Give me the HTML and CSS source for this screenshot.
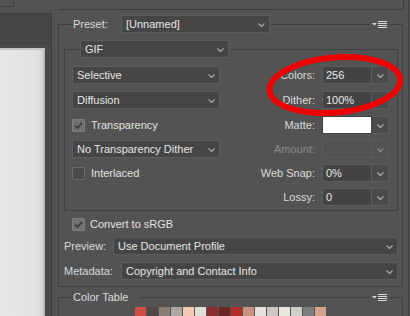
FILE: index.html
```html
<!DOCTYPE html>
<html>
<head>
<meta charset="utf-8">
<link rel="stylesheet" href="styles.css">
</head>
<body>
<div class="app">
  <div class="left">
    <div class="lt-top"><div class="lt-btn"></div></div>
    <div class="lt-tabs"></div>
    <div class="lt-canvas"><div class="lt-image"></div></div>
  </div>

  <div class="panel">
    <div class="topbox"></div>

    <div class="group outer">
      <div class="head">
        <span class="rule lead"></span>
        <span class="legend preset-label">Preset:</span>
        <div class="select preset-select"><span class="txt">[Unnamed]</span><svg class="chev" width="7" height="4" viewBox="0 0 7 4"><polyline points="0.5,0.5 3.5,3.5 6.5,0.5"/></svg></div>
        <span class="rule grow"></span>
        <svg class="menu" width="15" height="7" viewBox="0 0 15 7"><polygon points="0,2 5,2 2.5,4.5"/><rect x="6" y="0" width="9" height="1"/><rect x="6" y="2" width="9" height="1"/><rect x="6" y="4" width="9" height="1"/><rect x="6" y="6" width="9" height="1"/></svg>
        <span class="rule tail"></span>
      </div>

      <div class="body outer-body">
        <div class="group inner">
          <div class="head">
            <span class="rule lead2"></span>
            <div class="select gif-select"><span class="txt">GIF</span><svg class="chev" width="7" height="4" viewBox="0 0 7 4"><polyline points="0.5,0.5 3.5,3.5 6.5,0.5"/></svg></div>
            <span class="rule grow"></span>
          </div>
          <div class="opts">
            <div class="select"><span class="txt">Selective</span><svg class="chev" width="7" height="4" viewBox="0 0 7 4"><polyline points="0.5,0.5 3.5,3.5 6.5,0.5"/></svg></div>
            <div class="rcell"><span class="rlabel">Colors:</span><div class="combo"><span class="val">256</span><span class="arr"><svg class="chev" width="7" height="4" viewBox="0 0 7 4"><polyline points="0.5,0.5 3.5,3.5 6.5,0.5"/></svg></span></div></div>

            <div class="select"><span class="txt">Diffusion</span><svg class="chev" width="7" height="4" viewBox="0 0 7 4"><polyline points="0.5,0.5 3.5,3.5 6.5,0.5"/></svg></div>
            <div class="rcell"><span class="rlabel">Dither:</span><div class="combo"><span class="val">100%</span><span class="arr"><svg class="chev" width="7" height="4" viewBox="0 0 7 4"><polyline points="0.5,0.5 3.5,3.5 6.5,0.5"/></svg></span></div></div>

            <div class="check"><span class="box on"><svg width="11" height="11" viewBox="0 0 11 11"><polyline points="2,5.5 4.5,8 9,3"/></svg></span><span>Transparency</span></div>
            <div class="rcell"><span class="rlabel">Matte:</span><div class="combo"><span class="val white"></span><span class="arr"><svg class="chev" width="7" height="4" viewBox="0 0 7 4"><polyline points="0.5,0.5 3.5,3.5 6.5,0.5"/></svg></span></div></div>

            <div class="select"><span class="txt">No Transparency Dither</span><svg class="chev" width="7" height="4" viewBox="0 0 7 4"><polyline points="0.5,0.5 3.5,3.5 6.5,0.5"/></svg></div>
            <div class="rcell"><span class="rlabel dim">Amount:</span><div class="combo disabled"><span class="val"></span><span class="arr"><svg class="chev" width="7" height="4" viewBox="0 0 7 4"><polyline points="0.5,0.5 3.5,3.5 6.5,0.5"/></svg></span></div></div>

            <div class="check"><span class="box"></span><span>Interlaced</span></div>
            <div class="rcell"><span class="rlabel">Web Snap:</span><div class="combo"><span class="val">0%</span><span class="arr"><svg class="chev" width="7" height="4" viewBox="0 0 7 4"><polyline points="0.5,0.5 3.5,3.5 6.5,0.5"/></svg></span></div></div>

            <div></div>
            <div class="rcell"><span class="rlabel">Lossy:</span><div class="combo"><span class="val">0</span><span class="arr"><svg class="chev" width="7" height="4" viewBox="0 0 7 4"><polyline points="0.5,0.5 3.5,3.5 6.5,0.5"/></svg></span></div></div>
          </div>
        </div>

        <div class="check srgb"><span class="box on"><svg width="11" height="11" viewBox="0 0 11 11"><polyline points="2,5.5 4.5,8 9,3"/></svg></span><span>Convert to sRGB</span></div>

        <div class="frow preview-row"><span class="flabel">Preview:</span><div class="select wide"><span class="txt">Use Document Profile</span><svg class="chev" width="7" height="4" viewBox="0 0 7 4"><polyline points="0.5,0.5 3.5,3.5 6.5,0.5"/></svg></div></div>
        <div class="frow meta-row"><span class="flabel meta">Metadata:</span><div class="select wide"><span class="txt">Copyright and Contact Info</span><svg class="chev" width="7" height="4" viewBox="0 0 7 4"><polyline points="0.5,0.5 3.5,3.5 6.5,0.5"/></svg></div></div>
      </div>
    </div>

    <div class="group ctable">
      <div class="head">
        <span class="rule lead"></span>
        <span class="legend ct-label">Color Table</span>
        <span class="rule grow"></span>
        <svg class="menu" width="15" height="7" viewBox="0 0 15 7"><polygon points="0,2 5,2 2.5,4.5"/><rect x="6" y="0" width="9" height="1"/><rect x="6" y="2" width="9" height="1"/><rect x="6" y="4" width="9" height="1"/><rect x="6" y="6" width="9" height="1"/></svg>
        <span class="rule tail"></span>
      </div>
      <div class="swatches">
        <span class="sw" style="background:#d04c47"></span>
        <span class="sw" style="background:#4e4847"></span>
        <span class="sw" style="background:#8a7d78"></span>
        <span class="sw" style="background:#aaa8a0"></span>
        <span class="sw" style="background:#f5c9b3"></span>
        <span class="sw" style="background:#e0ded7"></span>
        <span class="sw" style="background:#8b2e2d"></span>
        <span class="sw" style="background:#6c2622"></span>
        <span class="sw" style="background:#b42d2d"></span>
        <span class="sw" style="background:#c8937c"></span>
        <span class="sw" style="background:#e6e2de"></span>
        <span class="sw" style="background:#cfc5c5"></span>
        <span class="sw" style="background:#e8e8e0"></span>
        <span class="sw" style="background:#d0d0c8"></span>
        <span class="sw" style="background:#7e7e7e"></span>
        <span class="sw" style="background:#d4a48c"></span>
      </div>
    </div>
  </div>

  <div class="edge"></div>

  <svg class="annotation" width="410" height="316" viewBox="0 0 410 316">
    <ellipse cx="335" cy="85" rx="65.5" ry="27.5" transform="rotate(-5 335 85)"/>
  </svg>
</div>
</body>
</html>
```

FILE: styles.css
```css
* { box-sizing: border-box; }

html, body {
  margin: 0;
  padding: 0;
  background: #535353;
}

body {
  font-family: "Liberation Sans", Arial, sans-serif;
  font-size: 11px;
  color: #e0e0e0;
}

.app {
  position: relative;
  display: flex;
  width: 410px;
  height: 316px;
  overflow: hidden;
  background: #535353;
}

/* ---------- left preview column ---------- */
.left {
  width: 52px;
  flex: none;
  display: flex;
  flex-direction: column;
}

.lt-top {
  height: 13px;
  flex: none;
}

.lt-btn {
  width: 14px;
  height: 7px;
  border-right: 1px solid #3e3e3e;
  border-bottom: 1px solid #3e3e3e;
}

.lt-tabs {
  height: 31px;
  flex: none;
  background: #464646;
  border-top: 1px solid #3d3d3d;
  border-bottom: 1px solid #3d3d3d;
  border-right: 1px solid #3a3a3a;
}

.lt-canvas {
  flex: 1;
  background: #4a4a4a;
  padding: 4px 6px 0 0;
  border-right: 1px solid #3a3a3a;
}

.lt-image {
  height: 100%;
  border-top: 2px solid #c6c6c6;
  border-right: 2px solid #bdbdbd;
  background: linear-gradient(to right, #e8e8e8, #e3e3e3 80%, #d6d6d6);
}

/* ---------- right panel ---------- */
.panel {
  width: 357px;
  flex: none;
  padding: 0 5px 0 6px;
  border-right: 1px solid #3e3e3e;
}

.edge {
  width: 1px;
  flex: none;
}

.topbox {
  height: 10px;
  margin-right: -1px;
  border-bottom: 1px solid #3e3e3e;
  border-right: 1px solid #3e3e3e;
}

.group {
  border: 1px solid #3e3e3e;
}

.group.outer {
  margin-top: 14px;
}

.head {
  display: flex;
  align-items: flex-start;
  height: 18px;
  margin-top: -10px;
  background: #535353;
}

.rule {
  height: 1px;
  margin-top: 9px;
  background: #3e3e3e;
}

.rule.lead { width: 14px; }
.rule.lead2 { width: 15px; }
.rule.grow { flex: 1; margin-left: 2px; }
.rule.tail { width: 12px; }

.legend {
  line-height: 18px;
  color: #dadada;
  white-space: nowrap;
}

.preset-label { width: 48px; }
.ct-label { width: 65px; }

.menu {
  flex: none;
  margin: 6px 3px 0 3px;
  fill: #d8d8d8;
}

/* select */
.select {
  display: flex;
  align-items: center;
  height: 18px;
  padding: 0 4px 0 4px;
  background: #454545;
  border: 1px solid #5c5c5c;
  border-radius: 1px;
  color: #e6e6e6;
}

.select .txt {
  flex: 1;
  white-space: nowrap;
  overflow: hidden;
}

.chev {
  flex: none;
  margin-top: 2px;
  fill: none;
  stroke: #a8a8a8;
  stroke-width: 1.2;
}

.preset-select { width: 149px; }
.gif-select { width: 149px; }

/* bodies */
.outer-body {
  padding: 0 4px 6px 5px;
}

.group.inner {
  margin-top: 16px;
}

.opts {
  display: grid;
  grid-template-columns: 148px 1fr;
  grid-template-rows: 19px 19px 18px 18px 18px 18px;
  row-gap: 6px;
  align-items: start;
  padding: 8px 8px 4px 7px;
}

.rcell {
  display: flex;
  align-items: center;
  justify-content: flex-end;
  height: 18px;
}

.rlabel {
  color: #dadada;
  margin-right: 7px;
  white-space: nowrap;
}

.rlabel.dim { color: #8a8a8a; }

.combo {
  display: flex;
  width: 67px;
  height: 18px;
}

.combo .val {
  flex: 1;
  display: flex;
  align-items: center;
  padding-left: 3px;
  background: #434343;
  border: 1px solid #5c5c5c;
  color: #e8e8e8;
}

.combo .val.white {
  background: #ffffff;
  border-color: #454545;
}

.combo .arr {
  width: 17px;
  display: flex;
  align-items: center;
  justify-content: center;
  background: #494949;
  border: 1px solid #5c5c5c;
  border-left: none;
}

.combo.disabled .val,
.combo.disabled .arr {
  background: #535353;
}

.combo.disabled .chev { stroke: #8a8a8a; }

/* checkboxes */
.check {
  display: flex;
  align-items: center;
  gap: 6px;
  height: 18px;
  white-space: nowrap;
  color: #e2e2e2;
}

.box {
  width: 13px;
  height: 13px;
  flex: none;
  display: flex;
  align-items: center;
  justify-content: center;
  border: 1px solid #6a6a6a;
  background: #4a4a4a;
  border-radius: 1px;
}

.box.on {
  background: #707070;
  border-color: #7e7e7e;
}

.box svg {
  fill: none;
  stroke: #363636;
  stroke-width: 1.6;
}

.check.srgb {
  margin: 4px 0 0 8px;
  gap: 5px;
}

.frow {
  display: flex;
  align-items: center;
  height: 18px;
}

.preview-row { margin-top: 4px; }
.meta-row { margin-top: 7px; }

.flabel {
  width: 49px;
  flex: none;
  color: #dadada;
}

.flabel.meta { width: 57px; }

.select.wide { flex: 1; }

/* color table */
.group.ctable {
  margin-top: 10px;
  height: 40px;
}

.swatches {
  display: flex;
  gap: 1px;
  padding: 1px 0 0 76px;
}

.sw {
  width: 11px;
  height: 11px;
  flex: none;
}

/* annotation */
.annotation {
  position: absolute;
  left: 0;
  top: 0;
  pointer-events: none;
}

.annotation ellipse {
  fill: none;
  stroke: #ee0000;
  stroke-width: 6;
}
```
